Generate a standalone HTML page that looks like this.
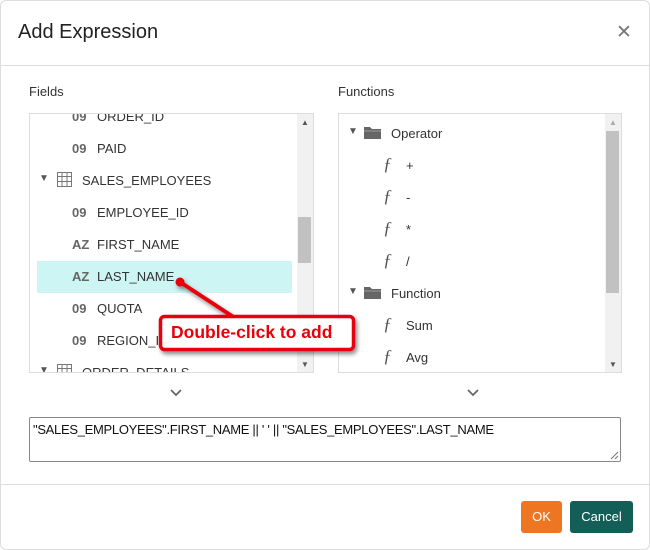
<!DOCTYPE html>
<html><head><style>
*{margin:0;padding:0;box-sizing:border-box}
body{width:650px;height:550px;background:#fff;font-family:"Liberation Sans",sans-serif;position:relative;overflow:hidden;color:#333}
.a{position:absolute}
.dlg{left:0;top:0;width:650px;height:550px;border:1px solid #ddd;border-radius:6px}
.t{font-size:13px;white-space:nowrap}
.ic{font-weight:bold;color:#666;font-size:13px}
.f{font-family:"Liberation Serif",serif;font-style:italic;color:#555;font-size:18px}
</style></head><body>
<div class="a dlg"></div>
<div class="a" style="left:18px;top:21px;font-size:20px;color:#222">Add Expression</div>
<div class="a" style="left:616px;top:21px;font-size:19px;color:#777">✕</div>
<div class="a" style="left:0;top:65px;width:650px;height:1px;background:#ddd"></div>
<div class="a t" style="left:29px;top:84px;color:#333">Fields</div>
<div class="a t" style="left:338px;top:84px;color:#333">Functions</div>

<!-- left list -->
<div class="a" style="left:29px;top:113px;width:285px;height:260px;border:1px solid #ddd;overflow:hidden">
 <div class="a" style="left:7px;top:147px;width:255px;height:32px;background:#ccf5f3"></div>
 <div class="a ic" style="left:42px;top:-5px">09</div><div class="a t" style="left:67px;top:-5px">ORDER_ID</div>
 <div class="a ic" style="left:42px;top:27px">09</div><div class="a t" style="left:67px;top:27px">PAID</div>
 <div class="a" style="left:9px;top:59px;font-size:10px;color:#555">▼</div>
 <svg class="a" style="left:27px;top:58px" width="15" height="15"><rect x="0.5" y="0.5" width="14" height="14" fill="none" stroke="#777"/><path d="M0 4.5H15M0 9.5H15M5 0V15M10 0V15" stroke="#777"/></svg>
 <div class="a t" style="left:52px;top:59px">SALES_EMPLOYEES</div>
 <div class="a ic" style="left:42px;top:91px">09</div><div class="a t" style="left:67px;top:91px">EMPLOYEE_ID</div>
 <div class="a ic" style="left:42px;top:123px">AZ</div><div class="a t" style="left:67px;top:123px">FIRST_NAME</div>
 <div class="a ic" style="left:42px;top:155px">AZ</div><div class="a t" style="left:67px;top:155px">LAST_NAME</div>
 <div class="a ic" style="left:42px;top:187px">09</div><div class="a t" style="left:67px;top:187px">QUOTA</div>
 <div class="a ic" style="left:42px;top:219px">09</div><div class="a t" style="left:67px;top:219px">REGION_ID</div>
 <div class="a" style="left:9px;top:251px;font-size:10px;color:#555">▼</div>
 <svg class="a" style="left:27px;top:250px" width="15" height="15"><rect x="0.5" y="0.5" width="14" height="14" fill="none" stroke="#777"/><path d="M0 4.5H15M0 9.5H15M5 0V15M10 0V15" stroke="#777"/></svg>
 <div class="a t" style="left:52px;top:251px">ORDER_DETAILS</div>
 <div class="a" style="left:267px;top:0;width:16px;height:258px;background:#f1f1f1"></div>
 <div class="a" style="left:268px;top:103px;width:13px;height:46px;background:#c1c1c1"></div>
 <div class="a" style="left:271px;top:4px;font-size:8px;color:#555">▲</div>
 <div class="a" style="left:271px;top:246px;font-size:8px;color:#555">▼</div>
</div>

<!-- right list -->
<div class="a" style="left:338px;top:113px;width:284px;height:260px;border:1px solid #ddd;overflow:hidden">
 <div class="a" style="left:9px;top:12px;font-size:10px;color:#555">▼</div>
 <svg class="a" style="left:25px;top:11px" width="18" height="14"><path d="M0 2h6l2 2h9v10H0z" fill="#666"/><path d="M0 6h17" stroke="#999"/></svg>
 <div class="a t" style="left:52px;top:12px">Operator</div>
 <div class="a f" style="left:44px;top:40px">ƒ</div><div class="a t" style="left:67px;top:44px">+</div>
 <div class="a f" style="left:44px;top:72px">ƒ</div><div class="a t" style="left:67px;top:76px">-</div>
 <div class="a f" style="left:44px;top:104px">ƒ</div><div class="a t" style="left:67px;top:108px">*</div>
 <div class="a f" style="left:44px;top:136px">ƒ</div><div class="a t" style="left:67px;top:140px">/</div>
 <div class="a" style="left:9px;top:172px;font-size:10px;color:#555">▼</div>
 <svg class="a" style="left:25px;top:171px" width="18" height="14"><path d="M0 2h6l2 2h9v10H0z" fill="#666"/><path d="M0 6h17" stroke="#999"/></svg>
 <div class="a t" style="left:52px;top:172px">Function</div>
 <div class="a f" style="left:44px;top:200px">ƒ</div><div class="a t" style="left:67px;top:204px">Sum</div>
 <div class="a f" style="left:44px;top:232px">ƒ</div><div class="a t" style="left:67px;top:236px">Avg</div>
 <div class="a" style="left:266px;top:0;width:16px;height:258px;background:#f1f1f1"></div>
 <div class="a" style="left:267px;top:17px;width:13px;height:162px;background:#c1c1c1"></div>
 <div class="a" style="left:270px;top:4px;font-size:8px;color:#aaa">▲</div>
 <div class="a" style="left:270px;top:246px;font-size:8px;color:#555">▼</div>
</div>

<!-- callout -->
<svg class="a" style="left:0;top:0" width="650" height="550">
 <defs><filter id="s" x="-20%" y="-20%" width="150%" height="160%"><feDropShadow dx="2" dy="3" stdDeviation="2" flood-color="#000" flood-opacity="0.45"/></filter></defs>
 <g filter="url(#s)">
  <line x1="180" y1="282" x2="235" y2="318" stroke="#e8000b" stroke-width="4"/>
  <circle cx="180" cy="282" r="4.5" fill="#e8000b"/>
  <rect x="160.5" y="316.5" width="193" height="33" rx="4" fill="#fff" stroke="#e8000b" stroke-width="3.5"/>
 </g>
</svg>
<div class="a" style="left:171px;top:322px;font-size:17.5px;font-weight:bold;color:#e8000b;font-family:'Liberation Sans',sans-serif">Double-click to add</div>

<!-- chevrons -->
<svg class="a" style="left:170px;top:389px" width="12" height="8"><path d="M1 1l5 5 5-5" fill="none" stroke="#666" stroke-width="1.8"/></svg>
<svg class="a" style="left:467px;top:389px" width="12" height="8"><path d="M1 1l5 5 5-5" fill="none" stroke="#666" stroke-width="1.8"/></svg>

<!-- textarea -->
<div class="a" style="left:29px;top:417px;width:592px;height:45px;border:1px solid #888;border-radius:2px"></div>
<div class="a t" style="left:33px;top:422px;color:#111;letter-spacing:-0.3px">"SALES_EMPLOYEES".FIRST_NAME || ' ' || "SALES_EMPLOYEES".LAST_NAME</div>
<svg class="a" style="left:610px;top:451px" width="9" height="9"><path d="M8 1L1 8M8 5L5 8" stroke="#777"/></svg>

<div class="a" style="left:0;top:484px;width:650px;height:1px;background:#ddd"></div>
<div class="a" style="left:521px;top:501px;width:41px;height:32px;background:#ee7623;border-radius:3px;color:#fff;font-size:13px;text-align:center;line-height:32px">OK</div>
<div class="a" style="left:570px;top:501px;width:63px;height:32px;background:#135f58;border-radius:3px;color:#fff;font-size:13px;text-align:center;line-height:32px">Cancel</div>
</body></html>
